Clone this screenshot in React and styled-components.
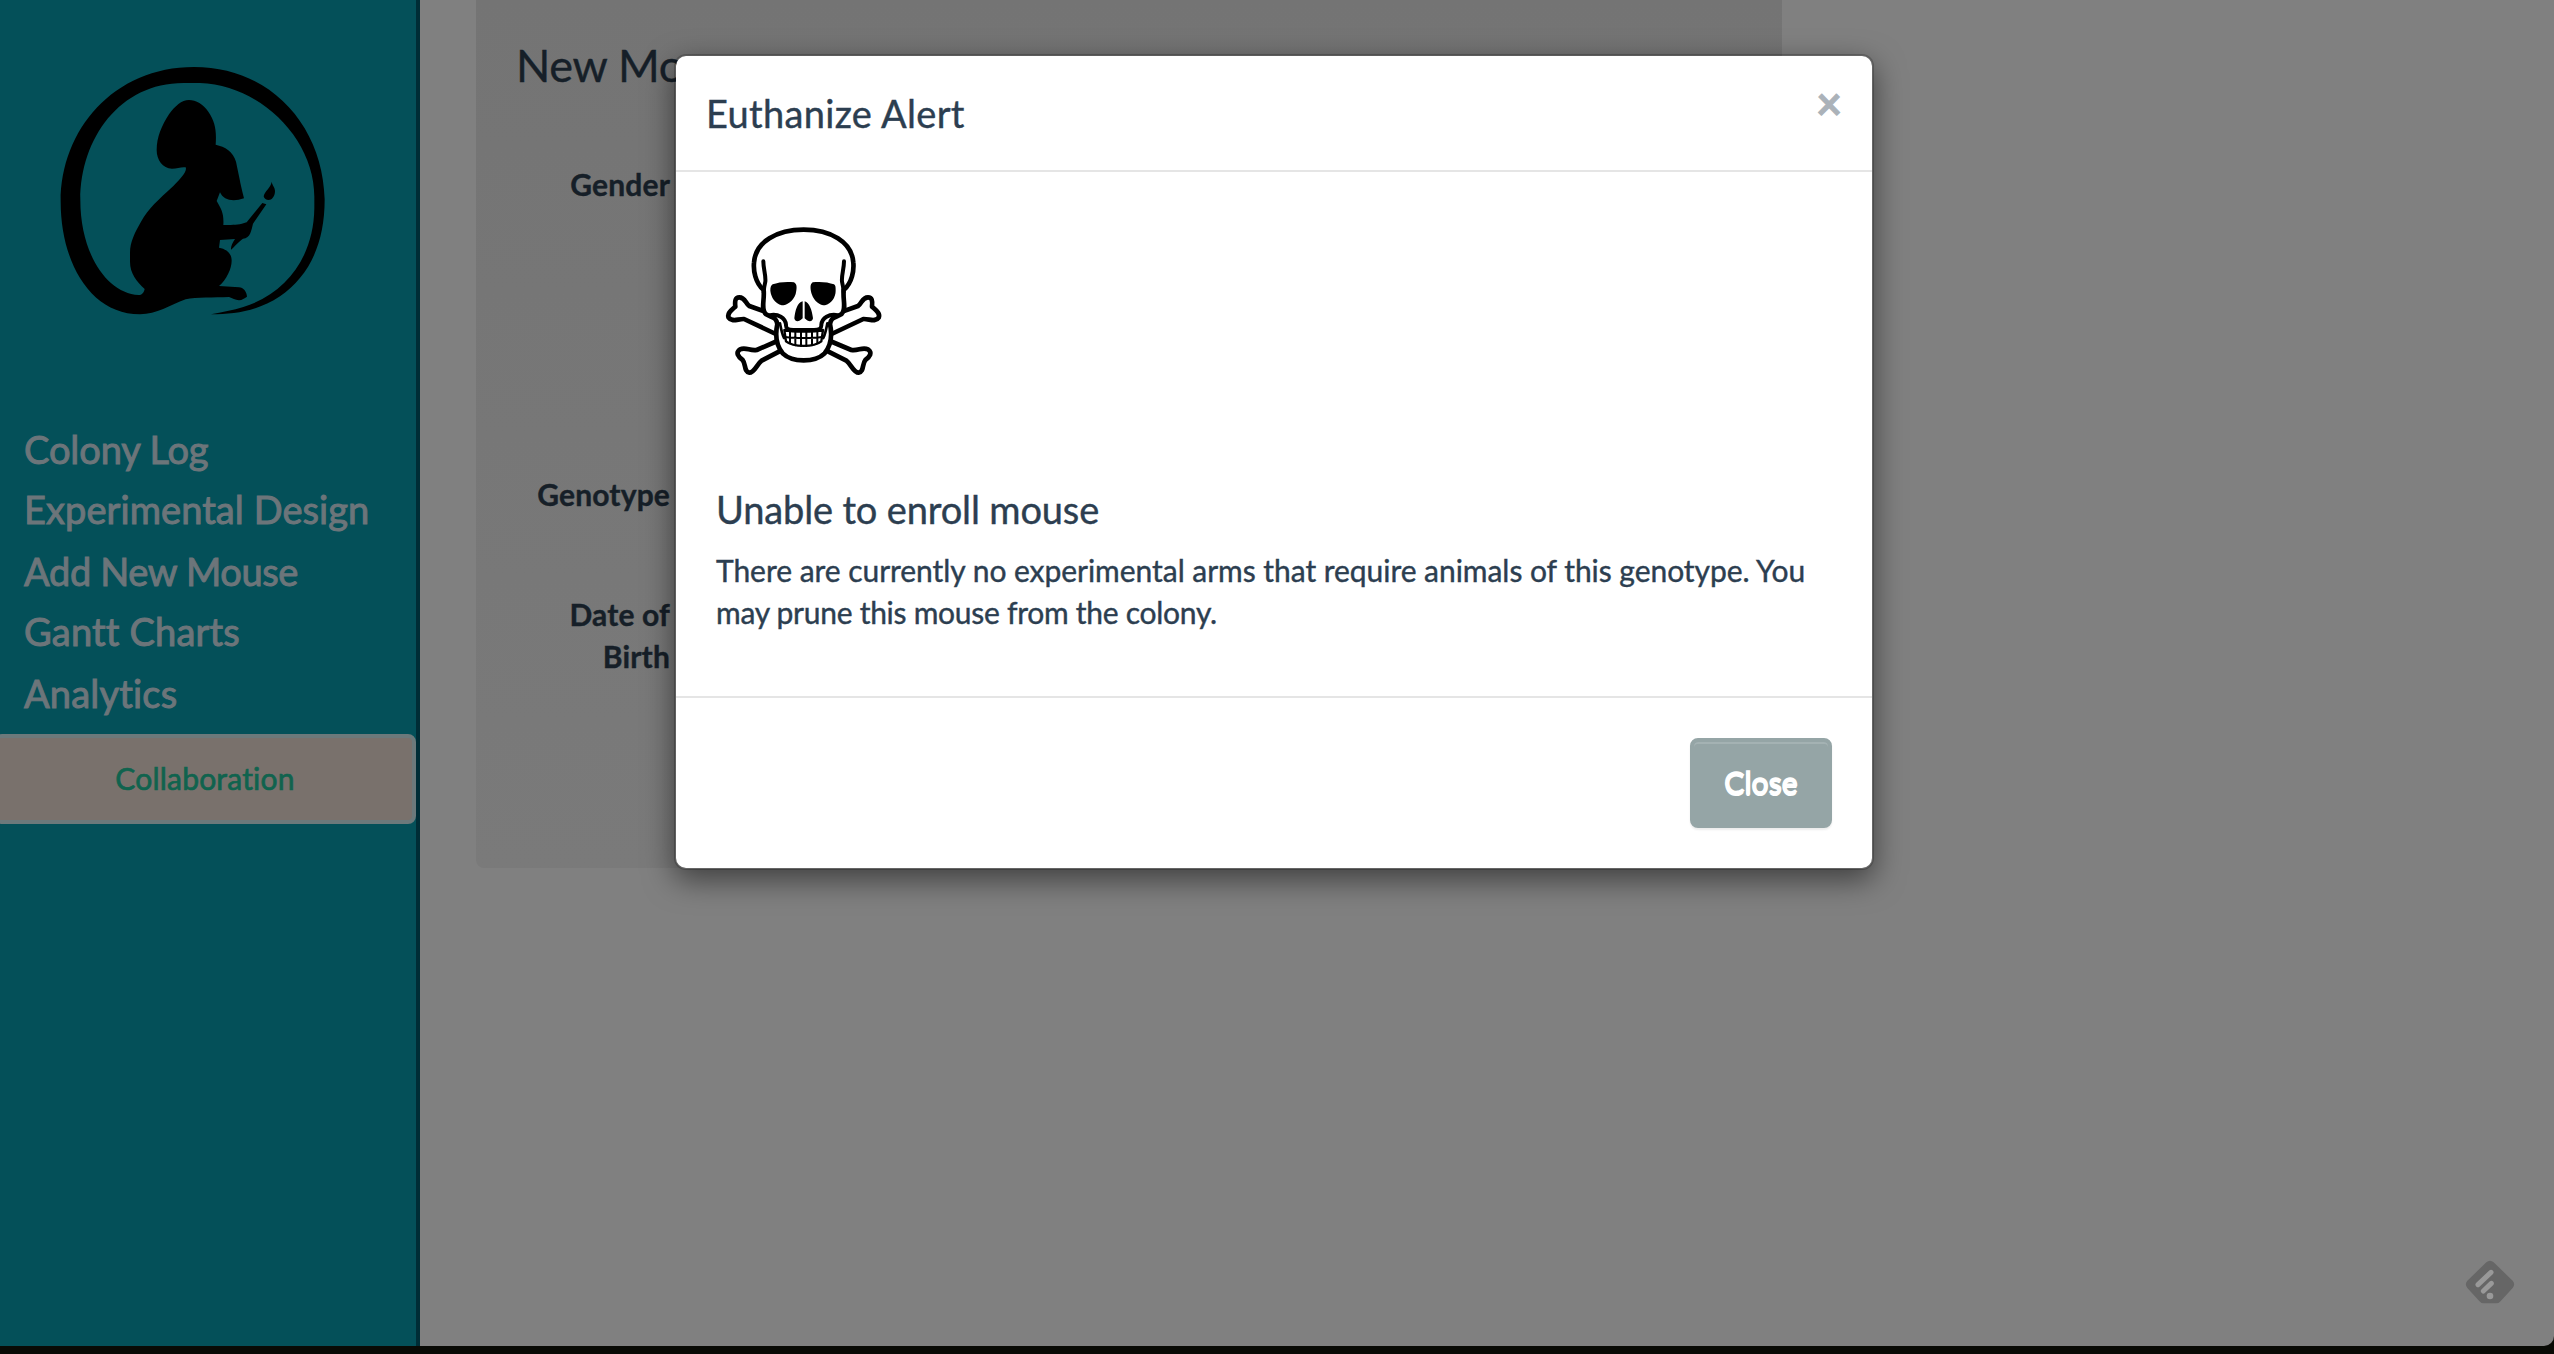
import React from "react";
import styled, { createGlobalStyle } from "styled-components";

const GlobalStyle = createGlobalStyle`
  *, *::before, *::after { box-sizing: border-box; }
  html, body { margin: 0; padding: 0; background: #090a05; overflow: hidden; }
  body {
    font: 400 30px/42px Lato, sans-serif;
    font-variant-ligatures: none;
    color: #2c3e50;
    -webkit-text-stroke: 0.4px currentColor;
  }
  h3, h4, p { margin: 0; font-weight: 400; }
`;

const Screen = styled.div`
  position: relative;
  width: 2554px;
  height: 1354px;
  overflow: hidden;
  background: #090a05;
`;

const Page = styled.div`
  display: flex;
  height: 1346px;
  background: #808080;
  border-bottom-right-radius: 10px;
  overflow: hidden;
`;

const Sidebar = styled.aside`
  display: flex;
  flex-direction: column;
  flex: none;
  width: 420px;
  background: #045059;
  border-right: 4px solid #002d36;
`;

const LogoBox = styled.div`
  height: 419px;
  padding: 50px 0 0 40px;
  svg { display: block; }
`;

const NavList = styled.nav`
  height: 315px;
`;

const NavItem = styled.a`
  display: block;
  height: 60px;
  padding-left: 24px;
  font-size: 38px;
  line-height: 61px;
  letter-spacing: ${(p) => p.$tracking || 0}px;
  color: #6c757a;
  -webkit-text-stroke: 1px #6c757a;

  &:nth-child(even) { height: 62px; }
`;

const CollabButton = styled.button`
  height: 90px;
  margin: 0 0 0 -6px;
  padding: 0 0 2px;
  border: 4px solid #6c797b;
  border-radius: 8px;
  background: #79716c;
  color: #10634e;
  font: inherit;
  font-variant-ligatures: none;
  letter-spacing: 0.2px;
  -webkit-text-stroke: 0.7px #10634e;
`;

const Content = styled.main`
  flex: 1;
  padding-left: 56px;
`;

const Well = styled.section`
  width: 1306px;
  height: 868px;
  padding: 44px 40px 0;
  border-radius: 0 0 8px 8px;
  background: linear-gradient(#747474, #7a7a7a);
  color: #161f28;
`;

const Legend = styled.h3`
  font-size: 45px;
  line-height: 42px;
  letter-spacing: -0.3px;
`;

const Fields = styled.div`
  padding-top: 77px;
`;

const FieldLabel = styled.div`
  width: 154px;
  height: ${(p) => p.$height}px;
  font-weight: 700;
  letter-spacing: 0.15px;
  text-align: right;
`;

const Modal = styled.div`
  position: absolute;
  left: 674px;
  top: 54px;
  width: 1200px;
  height: 816px;
  border: 2px solid rgba(0, 0, 0, 0.2);
  border-radius: 12px;
  background: #fff;
  background-clip: padding-box;
  box-shadow: 0 10px 30px rgba(0, 0, 0, 0.5);
`;

const ModalHeader = styled.header`
  display: flex;
  justify-content: space-between;
  height: 116px;
  padding: 30px;
  border-bottom: 2px solid #e5e5e5;
`;

const Heading = styled.h4`
  font-size: 38px;
  line-height: 54px;
  letter-spacing: ${(p) => p.$tracking || 0}px;
`;

const Dismiss = styled.button`
  height: 45px;
  margin-top: -5px;
  padding: 0;
  border: 0;
  background: none;
  font: 700 45px/45px Lato, sans-serif;
  color: #abb2b9;
  -webkit-text-stroke: 1px #abb2b9;
`;

const ModalBody = styled.div`
  height: 524px;
  padding: 38px 40px 0;
`;

const SkullBox = styled.div`
  height: 272px;
  margin-left: -16px;
  svg { display: block; }
`;

const Message = styled.p`
  padding-top: 13px;
`;

const MessageLine = styled.span`
  display: block;
  white-space: nowrap;
  letter-spacing: ${(p) => p.$tracking}px;
`;

const ModalFooter = styled.footer`
  display: flex;
  justify-content: flex-end;
  height: 172px;
  padding: 40px;
  border-top: 2px solid #e5e5e5;
`;

const CloseButton = styled.button`
  width: 142px;
  height: 90px;
  padding: 0 0 2px;
  border: 4px solid #95a5a6;
  border-radius: 8px;
  background: #95a5a6;
  color: #fff;
  font: inherit;
  letter-spacing: 0.1px;
  text-shadow: 0 2px 0 #fff;
  -webkit-text-stroke: 1.4px #fff;
  box-shadow: inset 0 2px 0 rgba(255, 255, 255, 0.15), 0 2px 2px rgba(0, 0, 0, 0.075);
`;

const FeedBadge = styled.div`
  position: absolute;
  left: 2465px;
  top: 1260px;
  svg { display: block; }
`;

function MouseLogo() {
  return (
    <svg width="310" height="280" viewBox="0 0 930 840">
      <path fillRule="evenodd" d="M513 793C585 793 655 782 720 739C805 680 854 585 854 448C848 225 690 51 462 51C220 51 62 240 62 455C62 635 150 793 300 793C350 793 390 765 437 748C470 741 520 743 567 741C578 744 585 750 597 751C607 751 613 744 621 740C620 725 610 712 597 712L537 708C560 688 575 655 575 632C575 610 560 597 537 593L540 570L585 567C578 578 572 588 573 599C582 592 595 575 609 566C632 564 634 540 639 521L679 463L667 459L620 517C595 526 580 525 550 525C552 490 545 480 530 453L540 427C550 450 578 457 612 445C608 428 602 405 600 393L588 335C580 305 555 290 527 284C530 240 525 215 505 185C490 163 468 150 447 150C425 150 405 168 387 193C365 227 350 262 350 300C350 330 368 355 396 356C412 355 425 350 437 352C442 364 425 383 400 408C355 450 325 475 303 515C285 547 270 575 270 608V635C270 670 290 695 314 717C311 730 305 735 296 735C200 730 121 610 121 450C121 265 240 99 430 99H480C660 105 823 265 823 440V475C821 620 740 730 610 771C580 780 545 787 513 793Z" />
      <path d="M695 395C697 407 705 411 705 423C705 440 695 450 686 450C679 450 672 446 671 439C674 422 692 415 695 395Z" />
    </svg>
  );
}

function Skull() {
  return (
    <svg width="200" height="180" viewBox="0 0 600 540" fill="#fff" stroke="#000" strokeWidth="14" strokeLinejoin="round" strokeLinecap="round">
      <path d="M195 305L148 288C136 280 136 262 118 262C106 262 104 272 106 290C95 300 80 310 86 323C96 338 115 326 132 327L240 378" />
      <path d="M427 305L474 288C486 280 486 262 504 262C516 262 518 272 516 290C527 300 542 310 536 323C526 338 507 326 490 327L382 378" />
      <path d="M232 393L170 420C150 424 138 410 120 418C106 428 114 440 128 450C138 462 132 486 148 488C164 488 170 463 185 452L250 418" />
      <path d="M390 393L454 420C474 424 486 410 504 418C518 428 510 440 496 450C486 462 492 486 476 488C460 488 454 463 439 452L372 418" />
      <path d="M191 240C165 218 160 180 162 158C166 95 232 59 311 59C390 59 456 95 460 158C462 180 457 218 431 240C428 272 440 296 425 312C405 324 394 320 390 342C398 380 392 408 374 430C345 458 277 458 248 430C230 408 224 380 232 342C228 320 217 324 197 312C182 296 194 272 191 240Z" />
      <path fill="none" strokeWidth="12" d="M190 154C190 178 198 195 196 215C192 232 192 236 191 246M432 154C432 178 424 195 426 215C430 232 430 236 431 246M208 316C235 310 256 324 258 344C257 356 265 360 280 360H342C357 360 365 356 364 344C366 324 387 310 414 316" />
      <path fill="none" strokeWidth="8" d="M240 340C244 360 246 372 252 384M382 340C378 360 376 372 370 384" />
      <path strokeWidth="7" d="M253 360C280 366 342 366 369 360L364 394C342 412 280 412 258 394Z" />
      <path fill="none" strokeWidth="6" d="M256 381C285 385 337 385 366 381M270 364V400M286 365V406M303 366V408M319 366V408M336 365V406M352 364V400" />
      <path fill="#000" stroke="none" d="M218 223C235 216 262 214 282 217C293 223 290 238 287 252C279 275 260 286 245 286C226 281 213 262 211 242C211 232 213 226 218 223ZM402 223C385 216 358 214 338 217C329 223 331 238 335 252C343 275 360 286 375 286C394 281 407 262 407 242C407 232 407 226 402 223Z" />
      <path fill="#000" stroke="none" d="M308 274C292 278 286 300 283 325C285 336 296 338 308 325ZM314 274C328 278 336 300 339 325C337 336 326 338 314 325Z" />
    </svg>
  );
}

const navItems = [
  { label: "Colony Log", tracking: -0.1 },
  { label: "Experimental Design", tracking: 0.08 },
  { label: "Add New Mouse", tracking: -0.35 },
  { label: "Gantt Charts", tracking: 0.18 },
  { label: "Analytics", tracking: 0.18 },
];

export default function App() {
  return (
    <>
      <GlobalStyle />
      <Screen>
        <Page>
          <Sidebar>
            <LogoBox><MouseLogo /></LogoBox>
            <NavList>
              {navItems.map(({ label, tracking }) => (
                <NavItem key={label} $tracking={tracking}>{label}</NavItem>
              ))}
            </NavList>
            <CollabButton>Collaboration</CollabButton>
          </Sidebar>
          <Content>
            <Well>
              <Legend>New Mouse</Legend>
              <Fields>
                <FieldLabel $height={310}>Gender</FieldLabel>
                <FieldLabel $height={120}>Genotype</FieldLabel>
                <FieldLabel $height={84}>Date of Birth</FieldLabel>
              </Fields>
            </Well>
          </Content>
        </Page>
        <FeedBadge>
          <svg width="50" height="44" viewBox="0 0 150 132">
            <path fill="#666" d="M64 7Q75 -2 86 7L143 62Q152 73 143 84L108 122Q102 130 94 130H56Q48 130 42 122L7 84Q-2 73 7 62Z" />
            <path stroke="#999" strokeWidth="15" strokeLinecap="round" d="M39 74L78 37M55 93L79 70" />
            <circle cx="75" cy="108" r="10" fill="#999" />
          </svg>
        </FeedBadge>
        <Modal>
          <ModalHeader>
            <Heading $tracking={0.33}>Euthanize Alert</Heading>
            <Dismiss>×</Dismiss>
          </ModalHeader>
          <ModalBody>
            <SkullBox><Skull /></SkullBox>
            <Heading $tracking={-0.15}>Unable to enroll mouse</Heading>
            <Message>
              <MessageLine $tracking={-0.04}>There are currently no experimental arms that require animals of this genotype. You</MessageLine>
              <MessageLine $tracking={-0.27}>may prune this mouse from the colony.</MessageLine>
            </Message>
          </ModalBody>
          <ModalFooter>
            <CloseButton>Close</CloseButton>
          </ModalFooter>
        </Modal>
      </Screen>
    </>
  );
}
